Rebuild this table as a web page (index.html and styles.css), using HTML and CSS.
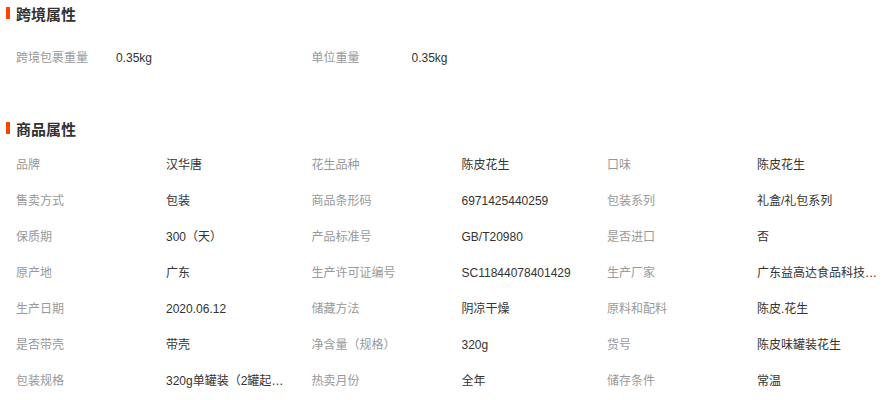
FILE: index.html
```html
<!DOCTYPE html>
<html lang="zh-CN">
<head>
<meta charset="UTF-8">
<meta name="viewport" content="width=device-width, initial-scale=1.0">
<title>商品属性</title>
<link rel="stylesheet" href="styles.css">
</head>
<body>
<div class="attrs">
    <div class="section cross">
        <h2 class="section-title">跨境属性</h2>
        <ul class="attr-grid">
            <li><span class="label">跨境包裹重量</span><span class="value">0.35kg</span></li>
            <li><span class="label">单位重量</span><span class="value">0.35kg</span></li>
        </ul>
    </div>
    <div class="section goods">
        <h2 class="section-title">商品属性</h2>
        <ul class="attr-grid">
            <li><span class="label">品牌</span><span class="value">汉华唐</span></li>
            <li><span class="label">花生品种</span><span class="value">陈皮花生</span></li>
            <li><span class="label">口味</span><span class="value">陈皮花生</span></li>
            <li><span class="label">售卖方式</span><span class="value">包装</span></li>
            <li><span class="label">商品条形码</span><span class="value">6971425440259</span></li>
            <li><span class="label">包装系列</span><span class="value">礼盒/礼包系列</span></li>
            <li><span class="label">保质期</span><span class="value">300（天）</span></li>
            <li><span class="label">产品标准号</span><span class="value">GB/T20980</span></li>
            <li><span class="label">是否进口</span><span class="value">否</span></li>
            <li><span class="label">原产地</span><span class="value">广东</span></li>
            <li><span class="label">生产许可证编号</span><span class="value">SC11844078401429</span></li>
            <li><span class="label">生产厂家</span><span class="value">广东益高达食品科技有限公司</span></li>
            <li><span class="label">生产日期</span><span class="value">2020.06.12</span></li>
            <li><span class="label">储藏方法</span><span class="value">阴凉干燥</span></li>
            <li><span class="label">原料和配料</span><span class="value">陈皮.花生</span></li>
            <li><span class="label">是否带壳</span><span class="value">带壳</span></li>
            <li><span class="label">净含量（规格）</span><span class="value">320g</span></li>
            <li><span class="label">货号</span><span class="value">陈皮味罐装花生</span></li>
            <li><span class="label">包装规格</span><span class="value">320g单罐装（2罐起批，整箱发货）</span></li>
            <li><span class="label">热卖月份</span><span class="value">全年</span></li>
            <li><span class="label">储存条件</span><span class="value">常温</span></li>
        </ul>
    </div>
</div>
</body>
</html>
```

FILE: styles.css
```css
* {
    margin: 0;
    padding: 0;
    box-sizing: border-box;
}
body {
    background: #ffffff;
    color: #333333;
    font-family: "Liberation Sans", "Noto Sans CJK SC", sans-serif;
    font-size: 12px;
}
.section-title {
    display: flex;
    align-items: center;
    height: 26px;
    padding-left: 6px;
    font-size: 15px;
    font-weight: bold;
    color: #333333;
}
.section-title::before {
    content: "";
    width: 4px;
    height: 12px;
    margin-right: 6px;
    background: #ff4400;
}
.attr-grid {
    list-style: none;
    display: grid;
    grid-template-columns: repeat(3, 295.5px);
    padding-left: 16px;
}
.attr-grid li {
    display: flex;
    height: 36px;
    line-height: 36px;
}
.label {
    flex-shrink: 0;
    color: #999999;
}
.value {
    max-width: 126px;
    color: #333333;
    white-space: nowrap;
    overflow: hidden;
    text-overflow: ellipsis;
}
.cross .attr-grid {
    padding-top: 14px;
    margin-bottom: 39px;
}
.cross .label {
    width: 100px;
}
.goods .attr-grid {
    padding-top: 6px;
}
.goods .label {
    width: 150px;
}
```
